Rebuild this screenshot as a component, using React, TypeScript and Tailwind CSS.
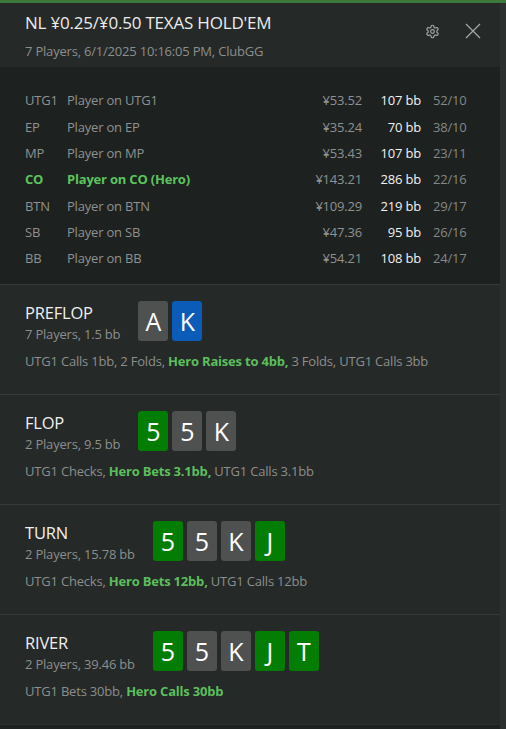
import React from "react";

type Card = { r: string; c: "g" | "n" | "b" };

const cardBg: Record<string, string> = {
  g: "bg-[#047d04]",
  n: "bg-[#4f5150]",
  b: "bg-[#0a5cb8]",
};

const players = [
  { pos: "UTG1", name: "Player on UTG1", money: "¥53.52", bb: "107 bb", stat: "52/10" },
  { pos: "EP", name: "Player on EP", money: "¥35.24", bb: "70 bb", stat: "38/10" },
  { pos: "MP", name: "Player on MP", money: "¥53.43", bb: "107 bb", stat: "23/11" },
  { pos: "CO", name: "Player on CO (Hero)", money: "¥143.21", bb: "286 bb", stat: "22/16", hero: true },
  { pos: "BTN", name: "Player on BTN", money: "¥109.29", bb: "219 bb", stat: "29/17" },
  { pos: "SB", name: "Player on SB", money: "¥47.36", bb: "95 bb", stat: "26/16" },
  { pos: "BB", name: "Player on BB", money: "¥54.21", bb: "108 bb", stat: "24/17" },
];

type Part = { t: string; hero?: boolean };

const streets: { title: string; sub: string; cards: Card[]; actions: Part[] }[] = [
  {
    title: "PREFLOP",
    sub: "7 Players, 1.5 bb",
    cards: [
      { r: "A", c: "n" },
      { r: "K", c: "b" },
    ],
    actions: [
      { t: "UTG1 Calls 1bb, 2 Folds, " },
      { t: "Hero Raises to 4bb,", hero: true },
      { t: " 3 Folds, UTG1 Calls 3bb" },
    ],
  },
  {
    title: "FLOP",
    sub: "2 Players, 9.5 bb",
    cards: [
      { r: "5", c: "g" },
      { r: "5", c: "n" },
      { r: "K", c: "n" },
    ],
    actions: [
      { t: "UTG1 Checks, " },
      { t: "Hero Bets 3.1bb,", hero: true },
      { t: " UTG1 Calls 3.1bb" },
    ],
  },
  {
    title: "TURN",
    sub: "2 Players, 15.78 bb",
    cards: [
      { r: "5", c: "g" },
      { r: "5", c: "n" },
      { r: "K", c: "n" },
      { r: "J", c: "g" },
    ],
    actions: [
      { t: "UTG1 Checks, " },
      { t: "Hero Bets 12bb,", hero: true },
      { t: " UTG1 Calls 12bb" },
    ],
  },
  {
    title: "RIVER",
    sub: "2 Players, 39.46 bb",
    cards: [
      { r: "5", c: "g" },
      { r: "5", c: "n" },
      { r: "K", c: "n" },
      { r: "J", c: "g" },
      { r: "T", c: "g" },
    ],
    actions: [
      { t: "UTG1 Bets 30bb, " },
      { t: "Hero Calls 30bb", hero: true },
    ],
  },
];

function Gear() {
  return (
    <svg width="15" height="15" viewBox="0 0 24 24" fill="none" stroke="#a3a6a4" strokeWidth="1.9" strokeLinecap="round" strokeLinejoin="round">
      <path d="M12.22 2h-.44a2 2 0 0 0-2 2v.18a2 2 0 0 1-1 1.73l-.43.25a2 2 0 0 1-2 0l-.15-.08a2 2 0 0 0-2.73.73l-.22.38a2 2 0 0 0 .73 2.73l.15.1a2 2 0 0 1 1 1.72v.51a2 2 0 0 1-1 1.74l-.15.09a2 2 0 0 0-.73 2.73l.22.38a2 2 0 0 0 2.73.73l.15-.08a2 2 0 0 1 2 0l.43.25a2 2 0 0 1 1 1.73V20a2 2 0 0 0 2 2h.44a2 2 0 0 0 2-2v-.18a2 2 0 0 1 1-1.73l.43-.25a2 2 0 0 1 2 0l.15.08a2 2 0 0 0 2.73-.73l.22-.39a2 2 0 0 0-.73-2.73l-.15-.08a2 2 0 0 1-1-1.74v-.5a2 2 0 0 1 1-1.74l.15-.09a2 2 0 0 0 .73-2.73l-.22-.38a2 2 0 0 0-2.73-.73l-.15.08a2 2 0 0 1-2 0l-.43-.25a2 2 0 0 1-1-1.73V4a2 2 0 0 0-2-2z" />
      <circle cx="12" cy="12" r="3" />
    </svg>
  );
}

function Close() {
  return (
    <svg width="16" height="16" viewBox="0 0 16 16" fill="none" stroke="#a3a6a4" strokeWidth="1.3">
      <path d="M1 1L15 15M15 1L1 15" />
    </svg>
  );
}

export default function App() {
  return (
    <div
      className="w-[506px] h-[729px] bg-[#2c302f] flex flex-col overflow-hidden"
      style={{ fontFamily: '"Open Sans", "Noto Sans", sans-serif' }}
    >
      <div className="h-[3px] bg-[#3b7a3b] shrink-0" />
      <div className="flex flex-1 min-h-0">
        <div className="w-[500px] flex flex-col bg-[#1e2220] rounded-tr-[3px] overflow-hidden">
          {/* Header */}
          <div className="h-[64px] bg-[#252928] pl-[25px] pr-[19px] flex items-start shrink-0">
            <div className="flex-1 pt-[8px]">
              <div className="text-[17px] leading-[24px] text-[#ececec] tracking-[-0.2px]">NL ¥0.25/¥0.50 TEXAS HOLD'EM</div>
              <div className="text-[13px] leading-[18px] text-[#8b8f8d] mt-[7px] tracking-[-0.2px]">7 Players, 6/1/2025 10:16:05 PM, ClubGG</div>
            </div>
            <div className="flex items-center gap-[25px] pt-[20px]">
              <Gear />
              <Close />
            </div>
          </div>
          {/* Players */}
          <div className="h-[217px] bg-[#1d2120] pt-[21px] pl-[25px] shrink-0 text-[13px] tracking-[-0.2px]">
            {players.map((p) => (
              <div key={p.pos} className="flex h-[26.3px] items-center">
                <div className={`w-[42px] ${p.hero ? "text-[#5cc45c] font-bold" : "text-[#8e9290]"}`}>{p.pos}</div>
                <div className={`w-[215px] ${p.hero ? "text-[#5cc45c] font-bold" : "text-[#8e9290]"}`}>{p.name}</div>
                <div className="w-[80px] text-right text-[#8e9290]">{p.money}</div>
                <div className="w-[59px] text-right text-[#f2f2f2]">{p.bb}</div>
                <div className="pl-[12px] text-[#848886]">{p.stat}</div>
              </div>
            ))}
          </div>
          {/* Streets */}
          {streets.map((s) => (
            <div key={s.title} className="h-[110px] shrink-0 bg-[#252928] border-t border-[#363a39] pl-[25px] pt-[16px]">
              <div className="flex items-start">
                <div className="pt-[1px] mr-[18px]">
                  <div className="text-[16.5px] leading-[22px] text-[#f0f0f0] tracking-[-0.2px]">{s.title}</div>
                  <div className="text-[13px] leading-[18px] text-[#8b8f8d] mt-[1px] tracking-[-0.2px]">{s.sub}</div>
                </div>
                <div className="flex gap-[4px]">
                  {s.cards.map((c, i) => (
                    <div
                      key={i}
                      className={`w-[30px] h-[40px] rounded-[3px] ${cardBg[c.c]} flex items-center justify-center text-white text-[25px] leading-none`}
                    >
                      {c.r}
                    </div>
                  ))}
                </div>
              </div>
              <div className="mt-[9px] text-[13px] leading-[18px] text-[#8b8f8d] tracking-[-0.2px]">
                {s.actions.map((a, i) => (
                  <span key={i} className={a.hero ? "text-[#5cbf5c] font-bold" : ""}>
                    {a.t}
                  </span>
                ))}
              </div>
            </div>
          ))}
          <div className="flex-1 bg-[#1e2220] border-t border-[#2a2e2d]" />
        </div>
        <div className="flex-1 bg-[#2c302f]" />
      </div>
    </div>
  );
}
